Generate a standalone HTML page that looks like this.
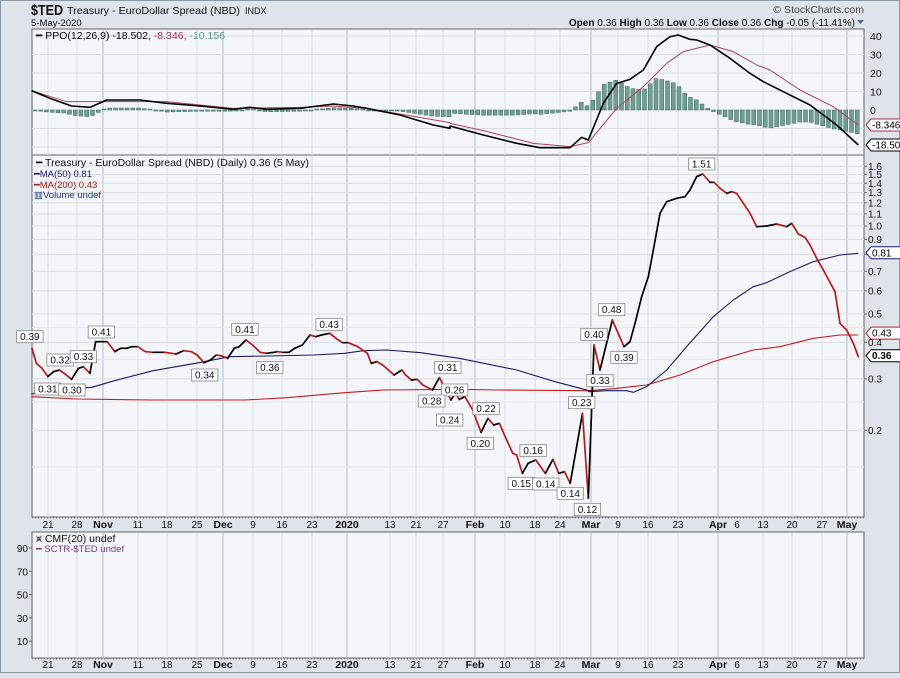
<!DOCTYPE html>
<html><head><meta charset="utf-8"><style>
html,body{margin:0;padding:0;}
body{width:900px;height:673px;overflow:hidden;background:#dfe3ea;font-family:"Liberation Sans",sans-serif;}
svg text{font-family:"Liberation Sans",sans-serif;}
</style></head><body>
<svg id="s" width="900" height="673" viewBox="0 0 900 673" xmlns="http://www.w3.org/2000/svg">
<rect x="0" y="0" width="900" height="673" fill="#dfe3ea"/>
<rect x="0.5" y="0.5" width="899" height="672" fill="none" stroke="#8d96a3"/>
<text x="31" y="15" font-size="15" font-weight="bold" fill="#111" textLength="32" lengthAdjust="spacingAndGlyphs">$TED</text>
<text x="67" y="14" font-size="10.5" fill="#111" textLength="173" lengthAdjust="spacingAndGlyphs">Treasury - EuroDollar Spread (NBD)</text>
<text x="245" y="14" font-size="9" fill="#111">INDX</text>
<text x="31" y="26" font-size="9.5" fill="#111">5-May-2020</text>
<text x="864" y="13" font-size="10.5" fill="#444" text-anchor="end">© StockCharts.com</text>
<text x="855" y="26" font-size="10" fill="#111" text-anchor="end"><tspan font-weight="bold">Open</tspan> 0.36  <tspan font-weight="bold">High</tspan> 0.36  <tspan font-weight="bold">Low</tspan> 0.36  <tspan font-weight="bold">Close</tspan> 0.36  <tspan font-weight="bold">Chg</tspan> -0.05 (-11.41%)</text>
<path d="M857 20 h7 l-3.5 4z" fill="#4a6a9a"/>
<rect x="32" y="29" width="832" height="126" fill="#f5f6fa" stroke="#666"/>
<rect x="32" y="155" width="832" height="362" fill="#f5f6fa" stroke="#666"/>
<rect x="32" y="532" width="832" height="126" fill="#f5f6fa" stroke="#666"/>
<g id="grid"></g>
<g id="data"></g>
<g id="txt" font-size="9" fill="#111">
<text x="36" y="39" font-size="10.5" font-family="DejaVu Sans Mono"><tspan fill="#000">━ PPO(12,26,9) -18.502,</tspan><tspan fill="#a03050"> -8.346,</tspan><tspan fill="#5a9a8a"> -10.156</tspan></text>
<text x="36" y="166" font-size="10.5" font-family="DejaVu Sans Mono">━ Treasury - EuroDollar Spread (NBD) (Daily) 0.36 (5 May)</text>
<text x="34" y="177" font-size="9.5" fill="#1a1a6e">━MA(50) 0.81</text>
<text x="34" y="188" font-size="9.5" fill="#a02020">━MA(200) 0.43</text>
<text x="34" y="198" font-size="9.5" fill="#1a3a6e">▥Volume undef</text>
<text x="36" y="542" font-size="10.5" font-family="DejaVu Sans Mono">⩙ CMF(20) undef</text>
<text x="36" y="552" font-size="9.5" fill="#7a3a8a">━ SCTR-$TED undef</text>
</g>
</svg>
<script>
(function(){
var NS="http://www.w3.org/2000/svg";
var g=document.getElementById('grid'),d=document.getElementById('data'),T=document.getElementById('txt');
function el(p,tag,a,txt){var e=document.createElementNS(NS,tag);for(var k in a)e.setAttribute(k,a[k]);if(txt!=null)e.textContent=txt;p.appendChild(e);return e;}
var ticks=[[48,'21'],[77,'28'],[103,'Nov',1],[138,'11'],[167,'18'],[197,'25'],[223,'Dec',1],[253,'9'],[282,'16'],[312,'23'],[347,'2020',1],[390,'13'],[416,'21'],[443,'27'],[475,'Feb',1],[505,'10'],[535,'18'],[560,'24'],[591,'Mar',1],[618,'9'],[648,'16'],[678,'23'],[718,'Apr',1],[737,'6',0,1],[763,'13'],[792,'20'],[822,'27'],[847,'May',1]];
ticks.forEach(function(t){
 if(!t[3]){[[30,155],[156,517],[533,658]].forEach(function(r){el(g,'line',{x1:t[0],x2:t[0],y1:r[0],y2:r[1],stroke:t[2]?'#b8bcc6':'#dadde4','stroke-width':1});});}
 [524,664].forEach(function(y){el(T,'text',{x:t[0],y:y+4,'text-anchor':'middle','font-size':t[2]?10.5:10,'font-weight':t[2]?'bold':'normal'},t[1]);});
});
[518,659].forEach(function(y){el(g,'line',{x1:32,x2:864,y1:y,y2:y,stroke:'#888','stroke-dasharray':'1 2'});});
function Y(v){return 226-127*Math.log(v);}
[1.6,1.5,1.4,1.3,1.2,1.1,1.0,0.9,0.8,0.7,0.6,0.5,0.4,0.3,0.2].forEach(function(v){var y=Y(v);el(g,'line',{x1:32,x2:864,y1:y,y2:y,stroke:'#dadde4'});el(g,'line',{x1:864,x2:867,y1:y,y2:y,stroke:'#666'});if(v!=0.8)el(T,'text',{x:868,y:y+3.5,'font-size':10},v.toFixed(1));});
[0.15,0.25,0.35,0.45].forEach(function(v){var y=Y(v);el(g,'line',{x1:32,x2:864,y1:y,y2:y,stroke:'#e6e8ee'});});
[40,30,20,10,0,-10,-20].forEach(function(v){var y=110-1.85*v;el(g,'line',{x1:32,x2:864,y1:y,y2:y,stroke:'#dadde4'});if(v>=0)el(T,'text',{x:870,y:y+4,'font-size':10.5},''+v);});
[90,70,50,30,10].forEach(function(v,i){var y=548+i*23.3;el(g,'line',{x1:29,x2:32,y1:y,y2:y,stroke:'#666'});el(T,'text',{x:28,y:y+4,'font-size':10,'text-anchor':'end'},''+v);});
function Z5(a){return a.map(function(p){return [p[0]/2.613,p[1]/3+300];});}
function Z4(a){return a.map(function(p){return [p[0]/3+580,p[1]/3+150];});}
function Z1(a){return a.map(function(p){return [p[0]/3,p[1]/3];});}
function Z2(a){return a.map(function(p){return [p[0]/3+450,p[1]/3];});}
function pl(pts,c,w){el(d,'polyline',{points:pts.map(function(p){return p.join(',');}).join(' '),fill:'none',stroke:c,'stroke-width':w,'stroke-linejoin':'round'});}
var ppo=Z1([[95,272],[150,295],[215,318],[270,322],[320,300],[420,300],[500,310],[600,318],[700,328],[750,322],[800,328],[900,325],[1000,312],[1060,318],[1100,325],[1200,345],[1300,375],[1350,385]]).concat(Z2([[0,378],[100,405],[200,430],[270,443],[360,443],[395,412],[415,420],[460,310],[500,250],[540,238],[580,210],[620,140],[660,110],[685,105],[720,118],[740,120],[780,135],[840,175],[900,220],[940,245],[1000,275],[1080,315],[1160,375],[1225,435]]));
var sig=Z1([[95,272],[200,305],[300,305],[500,305],[700,325],[900,322],[1000,318],[1100,325],[1350,368]]).concat(Z2([[0,370],[100,392],[250,430],[360,440],[415,428],[500,325],[580,260],[650,190],[700,155],[780,135],[850,155],[920,195],[960,210],[1050,270],[1150,320],[1225,375]]));
function interp(a,x){for(var i=1;i<a.length;i++){if(x<=a[i][0]){var t=(x-a[i-1][0])/(a[i][0]-a[i-1][0]);return a[i-1][1]+t*(a[i][1]-a[i-1][1]);}}return a[a.length-1][1];}
for(var x=35;x<=860;x+=5.75){var h=interp(sig,x)-interp(ppo,x);h=h*1.2;if(Math.abs(h)<1)h=h<0?-1:1;var y0=110;var top=h>0?y0-h:y0;el(d,'rect',{x:x-2,y:top,width:4,height:Math.abs(h),fill:'#6f9f90',stroke:'#3f6f60','stroke-width':0.5});}
pl(sig,'#b0405a',1);pl(ppo,'#000',1.6);
function mk(y,t,c,b){var x=866;el(d,'path',{d:'M'+x+' '+y+' l5 -6 h30 v12 h-30z',fill:'#fff',stroke:c});el(T,'text',{x:x+6,y:y+3.5,'font-size':10,'font-weight':b?'bold':'normal',fill:'#000'},t);}
mk(125,'-8.346','#a03050');mk(145,'-18.50','#000');
var ma200=Z5([[82,290],[200,297],[400,300],[640,300],[750,293],[900,278],[1000,270],[1200,268],[1300,270],[1540,272]]).concat(Z4([[25,722],[100,716],[200,705],[300,675],[400,635],[520,600],[600,590],[700,565],[780,555],[835,555]]));
var ma50=Z5([[82,282],[130,272],[240,262],[290,245],[400,212],[520,188],[600,170],[700,168],[820,165],[900,160],[950,152],[1010,150],[1100,158],[1200,175],[1350,210],[1450,245],[1540,272]]).concat(Z4([[25,725],[80,722],[140,722],[160,727],[200,710],[260,660],[320,590],[400,500],[460,450],[520,410],[560,398],[630,365],[700,335],[780,315],[835,310]]));
pl(ma200,'#c02020',1.1);pl(ma50,'#1a1a6e',1.1);
var pr=Z5([[82,145],[95,190],[110,205],[125,230],[140,215],[155,210],[170,222],[187,238],[205,205],[218,200],[235,220],[250,125],[280,125],[300,155],[315,145],[330,145],[345,140],[360,140],[380,155],[400,157],[430,157],[460,162],[480,152],[500,155],[515,165],[533,188],[550,180],[565,165],[580,168],[595,175],[612,145],[625,140],[643,120],[660,135],[680,157],[695,160],[710,158],[725,155],[740,157],[755,157],[770,145],[790,135],[810,105],[825,110],[840,105],[862,100],[878,115],[895,128],[910,128],[935,140],[960,160],[970,190],[985,185],[1000,195],[1015,210],[1030,225],[1050,210],[1060,225],[1075,240],[1090,238],[1105,255],[1130,270],[1148,233],[1165,270],[1178,300],[1190,280],[1200,298],[1215,290],[1235,330],[1257,397],[1275,355],[1290,375],[1305,370],[1320,410],[1340,460],[1350,465],[1365,520],[1380,490],[1400,480],[1425,520],[1445,478],[1460,520],[1475,515],[1490,550],[1522,340]]).concat(Z4([[25,1045],[42,585],[60,660],[97,510],[132,590],[150,575],[165,520],[185,440],[205,380],[220,300],[240,190],[260,155],[290,145],[315,140],[330,120],[350,80],[368,72],[390,97],[402,97],[420,115],[440,130],[455,125],[470,130],[490,160],[510,190],[530,230],[560,228],[590,222],[620,230],[635,220],[655,252],[675,262],[690,285],[710,325],[730,360],[765,425],[780,520],[800,540],[820,580],[835,620]]));
pr[0][0]=32;
for(var i=1;i<pr.length;i++){el(d,'line',{x1:pr[i-1][0],y1:pr[i-1][1],x2:pr[i][0],y2:pr[i][1],stroke:pr[i][1]>pr[i-1][1]+0.3?'#c01818':'#000','stroke-width':1.7,'stroke-linecap':'round'});}
function lb(x,y,t){var w=t.length*5.6+4;el(d,'rect',{x:x-w/2,y:y-6,width:w,height:12,fill:'#fff',stroke:'#888','stroke-width':0.8});el(T,'text',{x:x,y:y+3.5,'text-anchor':'middle','font-size':10},t);}
var L5=[[78,110,'0.39'],[157,180,'0.32'],[218,170,'0.33'],[125,267,'0.31'],[188,270,'0.30'],[265,96,'0.41'],[535,225,'0.34'],[640,88,'0.41'],[705,203,'0.36'],[860,74,'0.43'],[1170,203,'0.31'],[1188,270,'0.26'],[1128,303,'0.28'],[1175,360,'0.24'],[1270,326,'0.22'],[1255,430,'0.20'],[1393,452,'0.16'],[1362,550,'0.15'],[1426,552,'0.14'],[1490,580,'0.14'],[1520,308,'0.23'],[1535,628,'0.12']];
L5.forEach(function(a){lb(a[0]/2.613,a[1]/3+300,a[2]);});
[[42,553,'0.40'],[60,692,'0.33'],[95,479,'0.48'],[132,622,'0.39'],[365,42,'1.51']].forEach(function(a){lb(a[0]/3+580,a[1]/3+150,a[2]);});
mk(Y(0.81),'0.81','#1a1a6e');mk(Y(0.43),'0.43','#c02020');mk(Y(0.36),'0.36','#000',1);
})();
</script>
</body></html>
